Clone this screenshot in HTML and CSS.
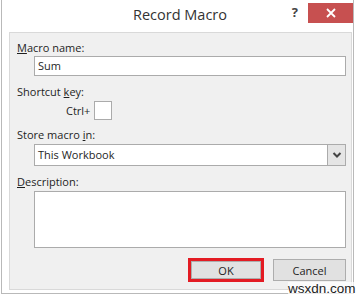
FILE: index.html
```html
<!DOCTYPE html>
<html>
<head>
<meta charset="utf-8">
<link rel="stylesheet" href="styles.css">
</head>
<body>
<div class="window">
  <div class="titlebar">
    <div class="title">Record Macro</div>
    <div class="help">?</div>
    <div class="close">
      <svg width="12" height="12" viewBox="0 0 12 12"><path d="M2 2 L10 10 M10 2 L2 10" stroke="#fff" stroke-width="1.8" fill="none"/></svg>
    </div>
  </div>
  <div class="panel">
    <div class="label"><u>M</u>acro name:</div>
    <div class="input">Sum</div>
    <div class="label l2">Shortcut <u>k</u>ey:</div>
    <div class="ctrl-row"><span class="ctrl">Ctrl+</span><span class="keybox"></span></div>
    <div class="label l3">Store macro <u>i</u>n:</div>
    <div class="select"><span class="sel-text">This Workbook</span><span class="arrow"><svg width="10" height="8" viewBox="0 0 10 8"><path d="M1.5 2 L5 5.5 L8.5 2" stroke="#444" stroke-width="2" fill="none"/></svg></span></div>
    <div class="label l4"><u>D</u>escription:</div>
    <div class="textarea"></div>
    <div class="buttons">
      <div class="okwrap"><div class="btn ok">OK</div></div>
      <div class="btn cancel">Cancel</div>
    </div>
  </div>
  <div class="watermark">wsxdn.com</div>
</div>
</body>
</html>
```
FILE: styles.css
```css
html, body { margin: 0; padding: 0; background: #fff; }
body { font-family: "Open Sans", "Noto Sans", sans-serif; color: #1e1e1e; }
.window {
  position: relative;
  width: 353px;
  height: 294px;
  margin-left: 1px;
  border: 1px solid #b9b9b9;
  border-top: none;
  background: #fff;
  box-sizing: border-box;
  display: flex;
  flex-direction: column;
}
.titlebar {
  height: 32px;
  display: flex;
  align-items: flex-start;
  position: relative;
}
.title {
  position: absolute;
  left: 0; right: 0; top: 5px;
  text-align: center;
  font-size: 14.5px;
  color: #333;
  padding-left: 5px;
}
.help {
  position: absolute;
  right: 55px; top: 3px;
  font-size: 13px;
  font-weight: bold;
  color: #444;
}
.close {
  position: absolute;
  right: 0; top: 3px;
  width: 45px; height: 20px;
  background: #c75050;
  display: flex; align-items: center; justify-content: center;
}
.panel {
  margin-left: 7px;
  width: 343px;
  height: 258px;
  box-sizing: border-box;
  background: #f0f0f0;
  border: 1px solid #d9d9d9;
  padding: 7px 5px 0 7px;
  font-size: 11px;
}
.label { line-height: 15px; height: 15px; }
.label u { text-decoration: underline; text-underline-offset: 1px; }
.input {
  margin: 1px 0 0 17px;
  height: 20px;
  box-sizing: border-box;
  border: 1px solid #ababab;
  background: #fff;
  padding-left: 3px;
  line-height: 17px;
}
.l2 { margin-top: 8px; }
.ctrl-row { display: flex; align-items: center; margin: 2px 0 0 49px; height: 19px; }
.ctrl { margin-right: 4px; }
.keybox { width: 18px; height: 19px; box-sizing: border-box; border: 1px solid #ababab; background: #fff; }
.l3 { margin-top: 7px; }
.select {
  margin: 2px 0 0 17px;
  height: 22px;
  box-sizing: border-box;
  border: 1px solid #ababab;
  background: #fff;
  display: flex;
  align-items: stretch;
}
.sel-text { flex: 1; padding-left: 3px; line-height: 20px; }
.arrow {
  width: 17px;
  background: #e5e5e5;
  border-left: 1px solid #ababab;
  display: flex; align-items: center; justify-content: center;
}
.l4 { margin-top: 8px; }
.textarea {
  margin: 2px 0 0 17px;
  height: 57px;
  box-sizing: border-box;
  border: 1px solid #ababab;
  background: #fff;
}
.buttons { display: flex; justify-content: flex-end; align-items: center; gap: 9px; margin-top: 10px; }
.okwrap { border: 3px solid #e31b23; }
.btn {
  height: 21px;
  box-sizing: border-box;
  border: 1px solid #adadad;
  background: #e1e1e1;
  display: flex; align-items: center; justify-content: center;
  font-size: 11px;
}
.ok { width: 70px; height: 18px; }
.cancel { width: 73px; height: 22px; }
.watermark {
  position: absolute;
  left: 286px; top: 282px;
  font-family: "Liberation Sans", Arial, sans-serif;
  font-size: 13.5px;
  color: #222;
  background: rgba(255,255,255,0.7);
  line-height: 13px;
}
```
